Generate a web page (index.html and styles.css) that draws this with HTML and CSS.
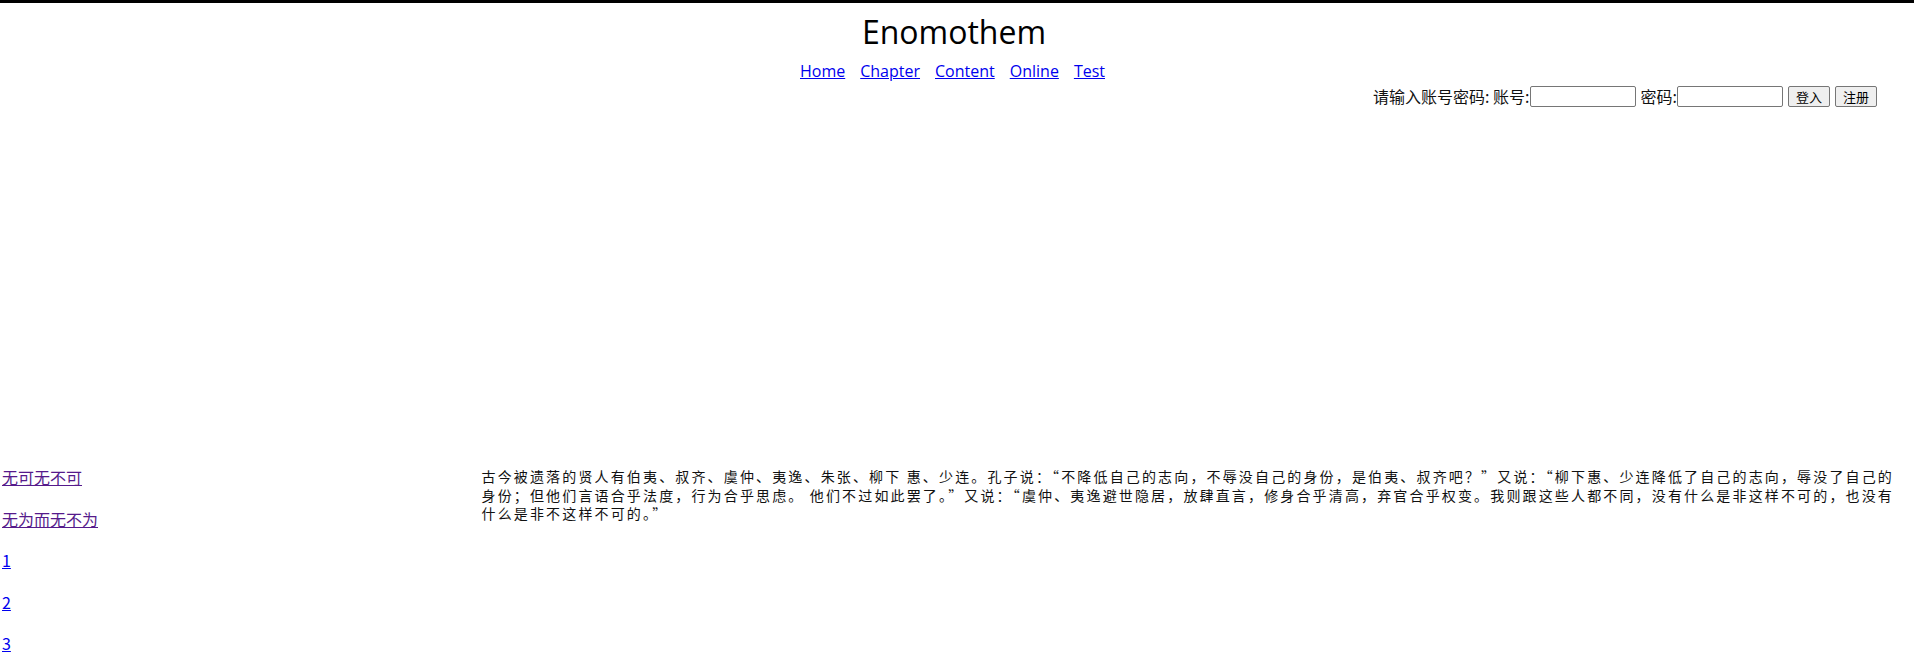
FILE: index.html
```html
<!DOCTYPE html>
<html lang="zh-CN">
<head>
<meta charset="utf-8">
<title>Enomothem</title>
<link rel="stylesheet" href="styles.css">
</head>
<body>
<header class="masthead">
  <h1 class="site-title">Enomothem</h1>
  <nav class="site-nav">
    <a href="#">Home</a>
    <a href="#">Chapter</a>
    <a href="#">Content</a>
    <a href="#">Online</a>
    <a href="#">Test</a>
  </nav>
  <form class="login">
    <span class="login-label">请输入账号密码: 账号:</span><input class="field" type="text"><span class="login-label pw">密码:</span><input class="field" type="password"><button class="btn" type="button">登入</button><button class="btn" type="button">注册</button>
  </form>
</header>
<div class="banner"></div>
<main class="content">
  <aside class="side">
    <a class="side-link visited" href="#">无可无不可</a>
    <a class="side-link visited" href="#">无为而无不为</a>
    <a class="side-link" href="#">1</a>
    <a class="side-link" href="#">2</a>
    <a class="side-link" href="#">3</a>
  </aside>
  <article class="text">
    <p>古今被遗落的贤人有伯夷、叔齐、虞仲、夷逸、朱张、柳下 惠、少连。孔子说：“不降低自己的志向，不辱没自己的身份，是伯夷、叔齐吧？”又说：“柳下惠、少连降低了自己的志向，辱没了自己的身份；但他们言语合乎法度，行为合乎思虑。 他们不过如此罢了。”又说：“虞仲、夷逸避世隐居，放肆直言，修身合乎清高，弃官合乎权变。我则跟这些人都不同，没有什么是非这样不可的，也没有什么是非不这样不可的。”</p>
  </article>
</main>
</body>
</html>
```

FILE: styles.css
```css
html, body {
  margin: 0;
  padding: 0;
}

body {
  font-family: "Noto Sans CJK SC", "Noto Sans", sans-serif;
  font-size: 16px;
  color: #000;
  background: #fff;
}

a {
  color: #0000ee;
}

.masthead {
  border-top: 3px solid #000;
  text-align: center;
}

.site-title {
  margin: 11px 0 0;
  padding-right: 6px;
  font-family: "Open Sans", "Noto Sans", sans-serif;
  font-weight: 400;
  font-size: 32px;
  line-height: 36px;
}

.site-nav {
  margin-top: 11px;
  padding-right: 9px;
  display: flex;
  justify-content: center;
  gap: 15px;
  font-family: "Open Sans", "Noto Sans", sans-serif;
  font-size: 16px;
  line-height: 20px;
}

.login {
  margin: 5px 0 0;
  padding-right: 37px;
  height: 21px;
  display: flex;
  justify-content: flex-end;
  align-items: center;
  font-size: 16px;
  line-height: 21px;
  color: #111;
}

.login-label {
  white-space: pre;
}

.login-label.pw {
  margin-left: 5px;
}

.field {
  box-sizing: border-box;
  width: 106px;
  height: 21px;
  margin: 0;
  padding: 1px 2px;
  border: 1px solid #767676;
  border-radius: 2px;
  background: #fff;
  font-size: 13px;
}

.btn {
  box-sizing: border-box;
  height: 21px;
  width: 42px;
  margin: 0 0 0 5px;
  padding: 0;
  border: 1px solid #767676;
  border-radius: 2px;
  background: #efefef;
  color: #000;
  font-family: "Noto Sans CJK SC", sans-serif;
  font-size: 13px;
  line-height: 19px;
}

.banner {
  height: 360px;
}

.content {
  display: grid;
  grid-template-columns: 25% 75%;
  align-items: start;
}

.side {
  padding-left: 2px;
  display: flex;
  flex-direction: column;
  align-items: flex-start;
  gap: 20.8px;
  font-size: 16px;
  line-height: 20.8px;
}

.side-link.visited {
  color: #551a8b;
}

.text {
  padding: 0 12px 0 3px;
}

.text p {
  margin: 0;
  font-size: 14px;
  letter-spacing: 2.15px;
  line-height: 18.5px;
  color: #111;
}
```
